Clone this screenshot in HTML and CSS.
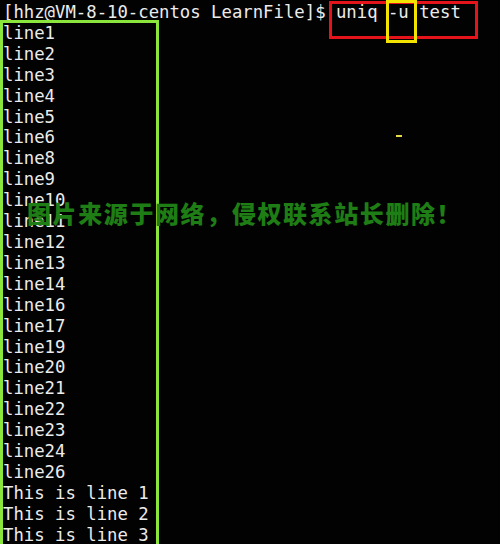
FILE: index.html
```html
<!DOCTYPE html>
<html>
<head>
<meta charset="utf-8">
<link rel="stylesheet" href="styles.css">
</head>
<body>
<div class="term">
<pre class="out">[hhz@VM-8-10-centos LearnFile]$ uniq -u test
line1
line2
line3
line4
line5
line6
line8
line9
line10
line11
line12
line13
line14
line16
line17
line19
line20
line21
line22
line23
line24
line26
This is line 1
This is line 2
This is line 3</pre>
<div class="box box-green"></div>
<div class="box box-red"></div>
<div class="box box-yellow"></div>
<div class="dot"></div>
<div class="watermark">图片来源于网络，侵权联系站长删除！</div>
</div>
</body>
</html>
```
FILE: styles.css
```css
html, body {
  margin: 0;
  padding: 0;
  background: #000;
}
.term {
  position: relative;
  width: 500px;
  height: 544px;
  overflow: hidden;
  background: #020202;
}
.out {
  margin: 0;
  padding: 2px 0 0 3px;
  font-family: "DejaVu Sans Mono", monospace;
  font-size: 17.3px;
  line-height: 20.9px;
  color: #ececec;
}
.box {
  position: absolute;
  box-sizing: border-box;
}
.box-green {
  left: 0;
  top: 20px;
  width: 159px;
  height: 540px;
  border: 3px solid #8ae63c;
}
.box-red {
  left: 329px;
  top: 1px;
  width: 149px;
  height: 38px;
  border: 3px solid #e5141a;
}
.box-yellow {
  left: 386px;
  top: 0;
  width: 31px;
  height: 43px;
  border: 3px solid #f2e400;
}
.dot {
  position: absolute;
  left: 396px;
  top: 135px;
  width: 6px;
  height: 2px;
  background: #e6d84a;
}
.watermark {
  position: absolute;
  left: 27px;
  top: 197px;
  font-family: "Noto Sans CJK SC", sans-serif;
  font-weight: 900;
  font-size: 24px;
  letter-spacing: 1.6px;
  line-height: 32px;
  color: #1e7d14;
  white-space: nowrap;
}
```
